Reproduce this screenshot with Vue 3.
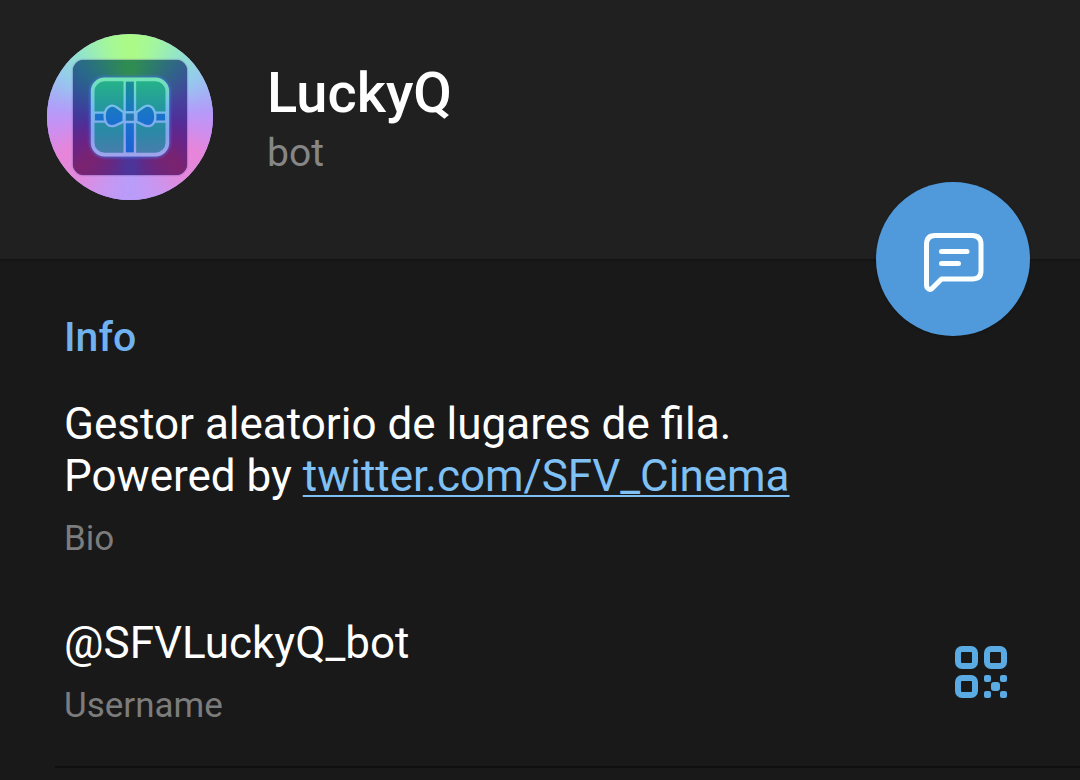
<script setup>
const profile = {
  name: 'LuckyQ',
  kind: 'bot',
  username: '@SFVLuckyQ_bot',
}
</script>

<template>
  <main class="profile">
    <header class="header">
      <div class="avatar" role="img" aria-label="LuckyQ">
        <div class="tile"></div>
        <svg class="gift" viewBox="20 23 498 498" aria-hidden="true">
          <defs>
            <linearGradient id="box" x1="0" y1="0" x2="0" y2="1">
              <stop offset="0" stop-color="#25b488" />
              <stop offset="0.4" stop-color="#2596a0" />
              <stop offset="0.7" stop-color="#2b88a6" />
              <stop offset="1" stop-color="#4a7cac" />
            </linearGradient>
            <linearGradient id="edge" gradientUnits="userSpaceOnUse" x1="0" y1="155" x2="0" y2="390">
              <stop offset="0" stop-color="#72e6b4" />
              <stop offset="0.35" stop-color="#74c0ea" />
              <stop offset="0.7" stop-color="#84a4ee" />
              <stop offset="1" stop-color="#a0a4ec" />
            </linearGradient>
            <linearGradient id="ribbon" gradientUnits="userSpaceOnUse" x1="0" y1="160" x2="0" y2="385">
              <stop offset="0" stop-color="#168f90" />
              <stop offset="0.5" stop-color="#1a72cc" />
              <stop offset="1" stop-color="#1b62d4" />
            </linearGradient>
            <filter id="glow" x="-20%" y="-20%" width="140%" height="140%">
              <feGaussianBlur stdDeviation="5" />
            </filter>
          </defs>
          <rect x="156" y="158" width="226" height="228" rx="38" fill="none" stroke="#4a78e8" stroke-width="16" opacity="0.7" filter="url(#glow)" />
          <rect x="157" y="159" width="224" height="226" rx="36" fill="url(#box)" />
          <g fill="url(#ribbon)" stroke="url(#edge)" stroke-width="7" stroke-linejoin="round">
            <path d="M253 162H284V382H253Z" />
            <path d="M160 259H378V286H160Z" />
            <path d="M250 258L228 242Q214 233 202 244Q192 254 193 271Q193 287 203 296Q213 302 226 297L250 286Z" />
            <path d="M288 258L310 242Q324 233 336 244Q345 254 345 271Q345 287 335 296Q325 302 312 297L288 286Z" />
            <path d="M253 258H284V287H253Z" fill="#2377b2" />
          </g>
          <rect x="157" y="159" width="224" height="226" rx="36" fill="none" stroke="url(#edge)" stroke-width="11" />
        </svg>
      </div>
      <div class="identity">
        <h1 class="name">{{ profile.name }}</h1>
        <p class="kind">{{ profile.kind }}</p>
      </div>
      <button class="message" type="button" aria-label="Send message">
        <svg viewBox="0 0 60 60" aria-hidden="true">
          <path d="M11 2.500H48Q57 2.500 57 11.500V38Q57 46 48 46H17.500L8 55.500Q5.500 57.500 3.500 55Q2.500 54 2.500 52V11.500Q2.500 2.500 11 2.500Z" />
          <path d="M17.500 18.500H43M17.500 30.500H34.500" />
        </svg>
      </button>
    </header>

    <section class="info">
      <h2 class="heading">Info</h2>
      <div class="entry">
        <p class="value">
          Gestor aleatorio de lugares de fila.<br />Powered by
          <a href="https://twitter.com/SFV_Cinema">twitter.com/SFV_Cinema</a>
        </p>
        <p class="label">Bio</p>
      </div>
      <div class="row">
        <div class="entry">
          <p class="value">{{ profile.username }}</p>
          <p class="label">Username</p>
        </div>
        <button class="qr" type="button" aria-label="Show QR code">
          <svg viewBox="0 0 52 52" aria-hidden="true">
            <g class="frames">
              <rect x="3" y="3" width="17" height="17" rx="4" />
              <rect x="32" y="3" width="17" height="17" rx="4" />
              <rect x="3" y="32" width="17" height="17" rx="4" />
            </g>
            <g class="dots">
              <rect x="29" y="29" width="7" height="7" rx="2" />
              <rect x="45" y="29" width="7" height="7" rx="2" />
              <rect x="36" y="36" width="9" height="9" rx="3" />
              <rect x="29" y="45" width="7" height="7" rx="2" />
              <rect x="45" y="45" width="7" height="7" rx="2" />
            </g>
          </svg>
        </button>
      </div>
    </section>
    <hr class="divider" />
  </main>
</template>

<style>
body {
  background: #191919;
}
</style>

<style scoped>
.profile {
  padding-bottom: 12px;
  background: #191919;
  color: #fff;
  font-family: Roboto, "Liberation Sans", sans-serif;
}

h1,
h2,
p {
  margin: 0;
}

.header {
  position: relative;
  display: flex;
  align-items: center;
  gap: 54px;
  padding: 34px 47px 59px;
  background: #202020;
  box-shadow: 0 1px 3px rgba(0, 0, 0, 0.3);
}

.avatar,
.tile {
  overflow: hidden;
}

.avatar::before,
.tile::before {
  content: "";
  position: absolute;
  inset: -8px;
}

.avatar {
  position: relative;
  flex: none;
  width: 166px;
  height: 166px;
  border-radius: 50%;
  background: #b79dfb;
}

.avatar::before {
  background: conic-gradient(
    #adfb84 0deg, #a3f79b 18deg, #91e2cf 40deg, #95c9ee 60deg,
    #b29cfa 84deg, #c990f2 98deg, #e884d8 118deg, #e18add 140deg,
    #c896f0 160deg, #b79dfb 180deg, #c896f0 200deg, #e18add 220deg,
    #e884d8 242deg, #c990f2 262deg, #b29cfa 276deg, #95c9ee 300deg,
    #91e2cf 320deg, #a3f79b 342deg, #adfb84 360deg
  );
  filter: blur(4px);
}

.tile {
  position: absolute;
  inset: 26px 26px 25px;
  border-radius: 11px;
  background: #44449c;
  box-shadow: 0 0 2px #57469a;
}

.tile::before {
  background: conic-gradient(
    #31904c 0deg, #2c7f68 22deg, #31628c 45deg, #44449c 68deg,
    #4e309b 90deg, #682389 115deg, #7c236d 136deg, #672782 158deg,
    #44389f 180deg, #672782 202deg, #7c236d 224deg, #682389 245deg,
    #43359c 270deg, #344d98 292deg, #28698b 315deg, #2c7f68 338deg, #31904c 360deg
  );
  filter: blur(5px);
}

.gift {
  position: absolute;
  inset: 0;
  width: 100%;
  height: 100%;
}

.name {
  margin-top: 4px;
  font-size: 56px;
  font-weight: 500;
  line-height: 64px;
}

.kind {
  margin-top: 4px;
  color: #868686;
  font-size: 39px;
  line-height: 48px;
}

.message {
  position: absolute;
  right: 50px;
  bottom: -77px;
  display: grid;
  place-items: center;
  width: 154px;
  height: 154px;
  padding: 0;
  border: 0;
  border-radius: 50%;
  background: #509adb;
  box-shadow: 0 1px 3px rgba(0, 0, 0, 0.2);
  cursor: pointer;
}

.message svg {
  width: 60px;
  height: 60px;
  margin: 8px 0 0 2px;
  fill: none;
  stroke: #fafeff;
  stroke-width: 5;
  stroke-linecap: round;
  stroke-linejoin: round;
}

.info {
  padding: 54px 73px 36px 64px;
}

.heading {
  margin-bottom: 37px;
  color: #70b2f0;
  font-size: 41px;
  font-weight: 500;
  line-height: 48px;
}

.value {
  font-size: 44px;
  line-height: 52px;
}

.value a {
  color: #7fc0f5;
  text-decoration-thickness: 2px;
  text-decoration-skip-ink: none;
  text-underline-offset: 4px;
}

.label {
  margin-top: 13px;
  color: #7c7c7c;
  font-size: 35px;
  line-height: 48px;
}

.row {
  display: flex;
  align-items: center;
  justify-content: space-between;
  margin-top: 54px;
}

.qr {
  padding: 0 0 4px;
  border: 0;
  background: none;
  cursor: pointer;
}

.qr svg {
  display: block;
  width: 52px;
  height: 52px;
}

.frames {
  fill: none;
  stroke: #5aaae4;
  stroke-width: 6;
}

.dots {
  fill: #5aaae4;
}

.divider {
  height: 2px;
  margin: 0 0 0 55px;
  border: 0;
  background: #0f0f0f;
}
</style>
